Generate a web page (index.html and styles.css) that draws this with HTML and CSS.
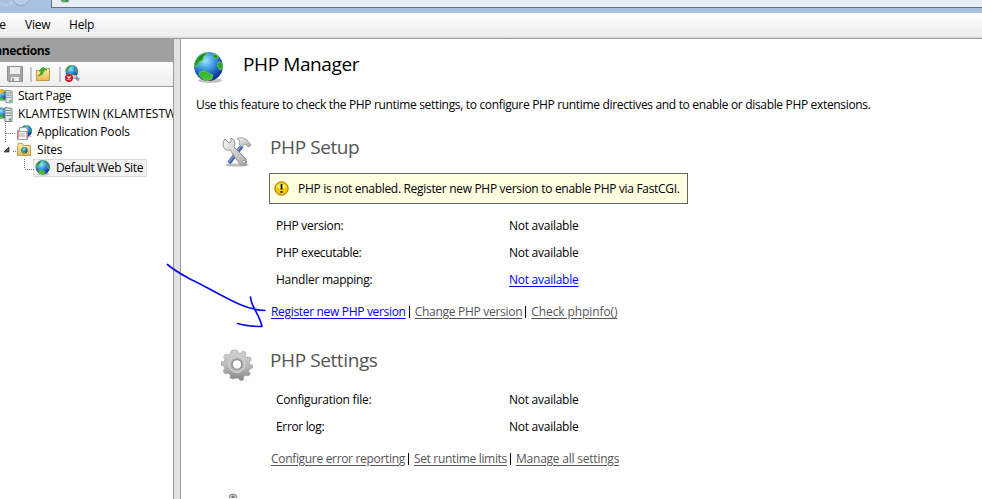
FILE: index.html
```
<!DOCTYPE html>
<html lang="en">
<head>
<meta charset="utf-8">
<title>PHP Manager</title>
<link rel="stylesheet" href="styles.css">
</head>
<body>
<svg width="0" height="0" class="defs">
  <defs>
    <radialGradient id="sea" cx=".4" cy=".3" r=".75"><stop offset="0" stop-color="#9fe4ff"/><stop offset=".4" stop-color="#3d9be0"/><stop offset=".75" stop-color="#1b48b4"/><stop offset="1" stop-color="#14237e"/></radialGradient>
    <linearGradient id="land" x2="0" y2="1"><stop offset="0" stop-color="#168022"/><stop offset="1" stop-color="#45c936"/></linearGradient>
    <linearGradient id="metal" x2="1" y2="1"><stop offset="0" stop-color="#f8f8f8"/><stop offset="1" stop-color="#a9a9a9"/></linearGradient>
    <linearGradient id="gear" x2="0" y2="1"><stop offset="0" stop-color="#d2d2d2"/><stop offset=".5" stop-color="#bcbcbc"/><stop offset="1" stop-color="#858585"/></linearGradient>
    <linearGradient id="folder" x2="0" y2="1"><stop offset="0" stop-color="#fff0b0"/><stop offset="1" stop-color="#e9b953"/></linearGradient>
    <symbol id="globe" viewBox="0 0 32 32">
      <ellipse cx="17" cy="28.5" rx="12" ry="2.5" fill="#777" opacity=".45"/>
      <circle cx="15.5" cy="14.5" r="14.4" fill="url(#sea)"/>
      <path d="M1.500 12Q4 3 12 1l3 1-4 2-1 4-4 2-2 5-2-1zM20 2l5 2-1 3-4-2zM25 10l4 1 .5 6-3 1-2-4zM7 20l5-1 3 2 5 2-1 4-5 2-4-2-4-4z" fill="url(#land)" stroke="#71dc48" stroke-width=".7"/>
    </symbol>
    <symbol id="server" viewBox="0 0 9 16">
      <path d="M1 1l7 1v13H1z" fill="#e2e5e7" stroke="#77818a"/><path d="M2 4h5M2 6.5h5M2 9h5" stroke="#7b868e"/><path d="M5 12h2v2H5z" fill="#30b748"/>
    </symbol>
  </defs>
</svg>
<header class="address">
  <svg class="nav" width="51" height="13" viewBox="0 0 51 13"><path d="M0 3Q7 9 15-1" fill="none" stroke="#b9cde5" stroke-width="2"/><circle cx="21" cy="-3" r="8.5" fill="#b9cde6" stroke="#8fa7c4"/></svg>
  <div class="field"><svg class="mini" width="12" height="12"><use href="#globe"/></svg></div>
</header>
<nav class="menu"><span class="m1">File</span><span class="m2">View</span><span class="m3">Help</span></nav>
<div class="body">
  <aside class="side">
    <div class="side-head"><span>Connections</span></div>
    <div class="tools">
      <svg width="90" height="24" viewBox="0 0 90 24">
        <path d="M7.500 4.500h15v15h-14l-1-1z" fill="#a6a6a6" stroke="#8e8e8e"/><path d="M10 5h10v7H10z" fill="#eee"/><path d="M11 15h8v4h-8z" fill="#eee"/><path d="M12 16h2v3h-2z" fill="#999"/>
        <path d="M31 5v15M60 5v15" stroke="#999"/>
        <path d="M36.500 8.500h8l2-2h3v12h-13z" fill="url(#folder)" stroke="#c8963d"/><path d="M38 14q3-1 3-5h-2l4-4 4 3h-3q0 5-6 6z" fill="#39b629" stroke="#268b20" stroke-width=".6"/>
        <use href="#globe" x="65" y="3" width="14" height="14"/><path d="M74 14l5 4" stroke="#8896a3" stroke-width="3"/><path d="M72 13h4v3h-4z" fill="#dce4ea" stroke="#7d8c99" stroke-width=".6"/>
        <circle cx="69" cy="16" r="4" fill="#c91d24"/><path d="M67.500 14.500l3 3m0-3l-3 3" stroke="#fff" stroke-width="1.300"/>
      </svg>
    </div>
    <div class="tree">
      <svg class="tree-art" width="60" height="92" viewBox="0 87 60 92">
        <use href="#globe" x="-4" y="89" width="12" height="13"/><path d="M-1 91q3-4 6 0l-3 3z" fill="#f3af23"/><use href="#server" x="5" y="89" width="8" height="15"/>
        <use href="#globe" x="-4" y="107" width="12" height="13"/><use href="#server" x="4" y="106" width="9" height="17"/>
        <path d="M5.500 123v20M6 133.500h10M13 151.500h3M24.500 159v10M25 169.500h10" fill="none" stroke="#777" stroke-dasharray="1 1"/>
        <use href="#globe" x="20" y="125" width="13" height="13"/><path d="M19.500 127.500h6l2 2v8h-8z" fill="#f9fcff" stroke="#8a9dac"/><path d="M17.500 131.500h10v8h-10zM19 134h6M19 136h6" fill="#fff" stroke="#96a2ad"/><path d="M18 130v9M27 132v7" stroke="#cd4842"/>
        <path d="M9 147v5H4z" fill="#555" stroke="#222" stroke-width=".7"/>
        <path d="M17.500 145.500l1-2h4l1 2h7v10h-13z" fill="url(#folder)" stroke="#c69d4f"/><use href="#globe" x="21" y="147" width="7" height="7"/>
      </svg>
      <div class="node n1"><span class="start">Start Page</span></div>
      <div class="node n1"><span class="host">KLAMTESTWIN (KLAMTESTWIN\Administrator)</span></div>
      <div class="node n2"><span class="pools">Application Pools</span></div>
      <div class="node n2"><span class="sites">Sites</span></div>
      <div class="node n3"><div class="selected"><svg width="16" height="16"><use href="#globe"/></svg><span class="site">Default Web Site</span></div></div>
    </div>
  </aside>
  <div class="split"></div>
  <main>
    <div class="title"><svg width="32" height="32"><use href="#globe"/></svg><h1>PHP Manager</h1></div>
    <p><span class="desc">Use this feature to check the PHP runtime settings, to configure PHP runtime directives and to enable or disable PHP extensions.</span></p>
    <section class="setup">
      <div class="head">
        <svg width="32" height="32" viewBox="0 0 32 32"><ellipse cx="16" cy="29" rx="12" ry="1.600" fill="#bbb"/><path d="M8 27L21 10" stroke="#4467ad" stroke-width="4"/><path d="M8 26L20 10" stroke="#86a4da" stroke-width="1.200"/><path d="M16 3q5-3 10 1l4 5-2 2-4-3-3 3-3-3 1-3z" fill="url(#metal)" stroke="#929292" stroke-width=".8"/><path d="M4 3l4 4 2-1V2q4 1 4 6l-1 3 12 12q2 4-1 6-4 1-6-2L9 14Q3 15 2 9q0-4 2-6zM23 24l-2 2 2 1 2-1z" fill="url(#metal)" stroke="#8b8b8b" stroke-width=".9" fill-rule="evenodd"/></svg>
        <h2 class="h-setup">PHP Setup</h2>
      </div>
      <div class="notice"><svg width="15" height="15" viewBox="0 0 15 15"><circle cx="7.500" cy="7.500" r="6.700" fill="#f5c400" stroke="#b17900"/><path d="M2 6q5-7 11 0-5 3-11 0z" fill="#fff07a"/><path d="M7.500 3v5.500M7.500 10v2" stroke="#111" stroke-width="1.800"/></svg><span class="warn">PHP is not enabled. Register new PHP version to enable PHP via FastCGI.</span></div>
      <dl>
        <dt><span class="k1">PHP version:</span></dt><dd><span class="na">Not available</span></dd>
        <dt><span class="k2">PHP executable:</span></dt><dd><span class="na">Not available</span></dd>
        <dt><span class="k3">Handler mapping:</span></dt><dd><a href="#" class="na">Not available</a></dd>
      </dl>
      <div class="links"><a href="#" class="l1">Register new PHP version</a><i></i><a class="l2 off">Change PHP version</a><i></i><a class="l3 off">Check phpinfo()</a></div>
    </section>
    <section class="settings">
      <div class="head">
        <svg width="32" height="32" viewBox="0 0 32 32"><path d="M13 1h3l1 3 3 .5L22 2l3 1.500-1 3 2 2 3-.5 1.500 3-2 2 .5 3H32l-.5 3-3 1-.8 2.500 1.800 2-2 2.500-3-.8-2 1.600v3l-3 .9-2-2.400h-3L12 30l-3-1 .3-3-2.300-2-3 .8L2 22l1.700-2.300L3 17l-3-1 .2-3L3 12.500 4 10 2.500 7.500l2-2.300L7 6l2.500-1.500L10 2z" fill="url(#gear)" stroke="#999" stroke-width=".6"/><circle cx="16" cy="15.500" r="8" fill="#bcbcbc" stroke="#ddd"/><circle cx="16" cy="15.500" r="5" fill="#fff" stroke="#949494" stroke-width="1.600"/></svg>
        <h2 class="h-settings">PHP Settings</h2>
      </div>
      <dl>
        <dt><span class="k4">Configuration file:</span></dt><dd><span class="na">Not available</span></dd>
        <dt><span class="k5">Error log:</span></dt><dd><span class="na">Not available</span></dd>
      </dl>
      <div class="links"><a class="l4 off">Configure error reporting</a><i></i><a class="l5 off">Set runtime limits</a><i></i><a class="l6 off">Manage all settings</a></div>
    </section>
    <svg class="next" width="10" height="5" viewBox="0 0 10 5"><circle cx="5" cy="5" r="4" fill="#ccc" stroke="#888"/><circle cx="5" cy="4" r="1.500" fill="#777"/></svg>
  </main>
  <svg class="arrow" width="110" height="70" viewBox="160 260 110 70"><path d="M167.500 264.500C175 271 181 274 190 279C207 287 227 299 240 304.500C250 309 256 310 265 310.500M250.500 297C251 307 259 313 262 326.500C253 326.500 244 325.500 237.500 323.500" fill="none" stroke="#0808f5" stroke-width="1.700" stroke-linecap="round" stroke-linejoin="round"/></svg>
</div>
</body>
</html>
```
FILE: styles.css
```
* { box-sizing: border-box; }
body { margin: 0; width: 982px; height: 499px; overflow: hidden; background: #fff; color: #000; font: 12px/18px "Open Sans", "Noto Sans", sans-serif; }
svg { display: block; flex: none; }
span, a, h1, h2 { white-space: nowrap; }
.defs { position: absolute; }
.address { height: 13px; display: flex; background: #a9c1de; }
.nav { background: #a9c1de; }
.field { width: 931px; height: 8px; overflow: hidden; background: #e6edf5; border-left: 1px solid #68707b; border-bottom: 1px solid #68707b; padding-left: 7px; }
.mini { margin-top: -9px; }
.menu { height: 26px; display: grid; grid-template-columns: 25px 44px auto; line-height: 24px; background: linear-gradient(#fff, #eee 23px, #ddd 24px, #ddd 25px, #999 25px); }
.m1 { margin-left: -13px; }
.m2, .m3 { letter-spacing: -.2px; }
.body { height: 460px; display: flex; position: relative; }
.side { width: 174px; overflow: hidden; border-right: 1px solid #999; }
.side-head { height: 23px; background: #a0a0a0; font-weight: 700; line-height: 24px; letter-spacing: -.4px; }
.side-head span { margin-left: -20px; }
.tools { height: 25px; background: linear-gradient(#fdfdfd, #eee); border-bottom: 1px solid #999; }
.tree { position: relative; }
.tree-art { position: absolute; left: 0; top: 0; z-index: 1; }
.node { height: 18px; display: flex; }
.n1 { padding-left: 18px; }
.n2 { padding-left: 37px; }
.n3 { padding-left: 33px; }
.start { letter-spacing: -.38px; }
.pools, .sites { letter-spacing: -.2px; }
.site { letter-spacing: -.36px; }
.selected { height: 18px; width: 114px; display: flex; align-items: center; gap: 5px; padding-left: 1px; background: #f2f2f2; border: 1px solid #dcdcdc; }
.split { width: 7px; background: #e1e1e1; border-right: 1px solid #999; }
main { width: 801px; overflow: hidden; }
.title { height: 52px; display: flex; align-items: center; gap: 18px; padding: 5px 0 0 12px; }
h1, h2 { margin: -8px 0 0; font-size: 19px; line-height: 30px; font-weight: 400; letter-spacing: -.4px; }
h2 { color: #555; }
p { margin: 0; height: 26px; padding-left: 15px; line-height: 27px; }
.desc { letter-spacing: -.33px; }
.setup { padding-top: 17px; }
.head { height: 39px; display: flex; gap: 17px; padding: 2px 0 0 40px; }
.head h2 { margin-top: -4px; }
.notice { margin-left: 88px; width: 419px; height: 31px; display: flex; align-items: center; gap: 9px; padding-left: 4px; background: #ffffe1; border: 1px solid #666; }
.warn { letter-spacing: -.31px; }
dl { margin: 8px 0 0 95px; display: grid; grid-template-columns: 233px auto; grid-auto-rows: 27px; line-height: 28px; }
dd { margin: 0; }
.na, .k1, .k3 { letter-spacing: -.26px; }
.k2, .k5 { letter-spacing: -.34px; }
.k4 { letter-spacing: -.22px; }
a { color: #00f; text-decoration: underline; text-underline-offset: 2px; }
.links { height: 18px; display: flex; align-items: center; margin: 10px 0 0 90px; }
.links a { letter-spacing: -.32px; }
.links .l2 { letter-spacing: -.28px; }
.links .l3 { letter-spacing: -.1px; }
.links .l6 { letter-spacing: -.22px; }
.off { color: #555; }
i { width: 1px; height: 12px; margin: 0 5px 0 3px; background: #000; }
.settings { padding-top: 26px; }
.settings dl { margin-top: 0; }
.next { margin: 25px 0 0 47px; }
.arrow { position: absolute; left: 160px; top: 221px; }
```
